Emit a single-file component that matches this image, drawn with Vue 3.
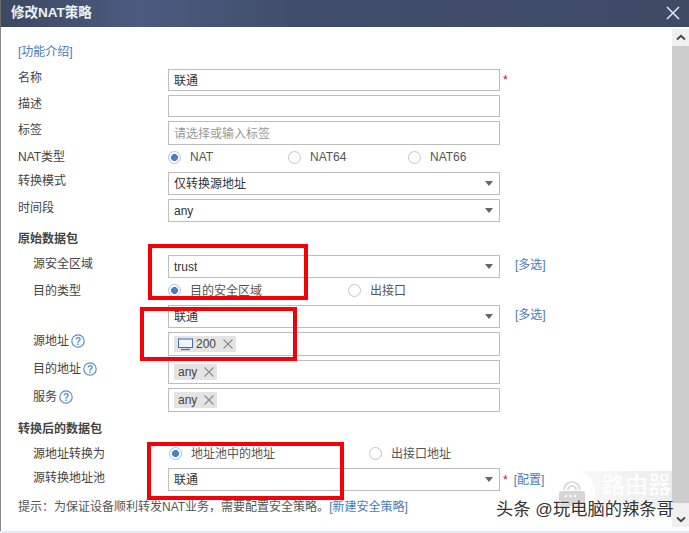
<script setup>
const tagSources = [
  { label: '源地址', chip: '200', icon: true, h: 'r332' },
  { label: '目的地址', chip: 'any', icon: false, h: 'r360' },
  { label: '服务', chip: 'any', icon: false, h: 'r388' },
]
</script>

<template>
  <div class="page">
    <header class="titlebar">
      <span class="title">修改NAT策略</span>
      <svg class="close" width="14" height="14" viewBox="0 0 14 14"><path d="M1 1 13 13M13 1 1 13" stroke="#e4e8ee" stroke-width="1.500" fill="none" /></svg>
    </header>

    <div class="body">
      <main class="form">
        <div class="intro"><a class="link">[功能介绍]</a></div>

        <div class="row h22">
          <label class="lab up4">名称</label>
          <div class="box input"><span>联通</span></div>
          <span class="star">*</span>
        </div>
        <div class="row h22 mt4">
          <label class="lab up4">描述</label>
          <div class="box input"></div>
        </div>
        <div class="row h24 mt4">
          <label class="lab up">标签</label>
          <div class="box input"><span class="ph">请选择或输入标签</span></div>
        </div>
        <div class="row h24">
          <label class="lab">NAT类型</label>
          <div class="radios">
            <span class="radio on w120"><i></i>NAT</span>
            <span class="radio w120"><i></i>NAT64</span>
            <span class="radio"><i></i>NAT66</span>
          </div>
        </div>
        <div class="row h23 mt3">
          <label class="lab up">转换模式</label>
          <div class="box select"><span>仅转换源地址</span><b class="caret"></b></div>
        </div>
        <div class="row h23 mt4">
          <label class="lab up">时间段</label>
          <div class="box select"><span>any</span><b class="caret"></b></div>
        </div>

        <div class="section s1">原始数据包</div>

        <div class="row h23 mt6">
          <label class="lab sub up">源安全区域</label>
          <div class="box select"><span>trust</span><b class="caret"></b></div>
          <a class="link more">[多选]</a>
        </div>
        <div class="row h24 low">
          <label class="lab sub">目的类型</label>
          <div class="radios">
            <span class="radio on w180"><i></i>目的安全区域</span>
            <span class="radio"><i></i>出接口</span>
          </div>
        </div>
        <div class="row h23 mt3">
          <label class="lab sub"></label>
          <div class="box select"><span>联通</span><b class="caret"></b></div>
          <a class="link more">[多选]</a>
        </div>

        <div v-for="t in tagSources" :key="t.h" class="row h24 mt4">
          <label class="lab sub up">
            {{ t.label }}
            <svg class="help" width="14" height="14" viewBox="0 0 14 14">
              <circle cx="7" cy="7" r="6.200" fill="#fff" stroke="#5b8fcb" stroke-width="1.200" />
              <text x="7" y="10.800" text-anchor="middle" class="helptext">?</text>
            </svg>
          </label>
          <div class="box tags">
            <span class="chip">
              <svg v-if="t.icon" width="15" height="13" viewBox="0 0 15 13" class="mon">
                <rect x="0.500" y="1" width="14" height="8.500" fill="#eef4fb" stroke="#3f6fb0" />
                <path d="M3 11.500h9" stroke="#3f6fb0" stroke-width="1.200" />
              </svg>
              {{ t.chip }}
              <svg width="10" height="10" viewBox="0 0 10 10" class="x"><path d="M.5.5l9 9M9.500.5l-9 9" stroke="#8a8a8a" stroke-width="1.100" /></svg>
            </span>
          </div>
        </div>

        <div class="section s2">转换后的数据包</div>

        <div class="row h24 mt2 low">
          <label class="lab sub">源地址转换为</label>
          <div class="radios nudge">
            <span class="radio on w200"><i></i>地址池中的地址</span>
            <span class="radio"><i></i>出接口地址</span>
          </div>
        </div>
        <div class="row h23 mt3">
          <label class="lab sub up2">源转换地址池</label>
          <div class="box select"><span>联通</span><b class="caret"></b></div>
          <span class="star">*</span>
          <a class="link conf">[配置]</a>
        </div>

        <p class="hint">提示：为保证设备顺利转发NAT业务，需要配置安全策略。<a class="link">[新建安全策略]</a></p>
      </main>

      <aside class="scrollbar">
        <div class="sbtn">
          <svg width="10" height="7" viewBox="0 0 10 7"><path d="M1 5.500 5 1.800l4 3.700" stroke="#444" stroke-width="1.800" fill="none" /></svg>
        </div>
        <div class="track"></div>
        <div class="sbtn bottom">
          <svg width="10" height="7" viewBox="0 0 10 7"><path d="M1 1.500 5 5.200l4-3.700" stroke="#444" stroke-width="1.800" fill="none" /></svg>
        </div>
      </aside>
    </div>
    <div class="footer"></div>

    <div class="mark m1"></div>
    <div class="mark m2"></div>
    <div class="mark m3"></div>

    <div class="wm-band"></div>
    <div class="wm-circle">
      <svg width="28" height="32" viewBox="0 0 28 32">
        <path d="M6 13a8 8 0 0 1 16 0M10 13a4 4 0 0 1 8 0" stroke="#dcdcdc" stroke-width="2.200" fill="none" />
        <rect x="1" y="14" width="26" height="15" rx="2" fill="#d6d6d6" />
        <circle cx="8" cy="19" r="1.200" fill="#fff" /><circle cx="12.500" cy="19" r="1.200" fill="#fff" /><circle cx="17" cy="19" r="1.200" fill="#fff" />
      </svg>
    </div>
    <span class="wm-text">路由器</span>
    <span class="wm-author">头条 @玩电脑的辣条哥</span>
  </div>
</template>

<style scoped>
.page {
  position: relative;
  width: 689px;
  height: 533px;
  overflow: hidden;
  background: #fff;
  font-family: "Liberation Sans", "Noto Sans CJK SC", sans-serif;
  font-size: 12px;
  line-height: 16px;
  color: #444;
}
.titlebar {
  height: 27px;
  display: flex;
  align-items: center;
  justify-content: space-between;
  padding: 0 11px;
  background: linear-gradient(90deg, #3c4861 0, #4b5b80 20%, #414e6b 42%, #3f4b65 100%);
  border-left: 1px solid #6b6b6b;
  box-sizing: border-box;
}
.title { color: #eef1f6; font-size: 13.500px; font-weight: 700; line-height: 27px; margin-bottom: 2px; margin-left: -1px; }
.close { margin-bottom: 2px; margin-right: -2px; }
.body {
  display: flex;
  height: 504px;
  border-left: 1px solid #8a8a8a;
  box-sizing: border-box;
}
.form { flex: 1; padding: 15px 0 0 17px; min-width: 0; }
.intro { height: 27px; line-height: 18px; padding-top: 1px; box-sizing: border-box; }
.link { color: #4a7ab8; }
.row { display: flex; align-items: center; }
.low { padding-top: 1px; box-sizing: border-box; }
.h22 { height: 22px; }
.h23 { height: 23px; }
.h24 { height: 24px; }
.mt2 { margin-top: 2px; }
.mt3 { margin-top: 3px; }
.mt4 { margin-top: 4px; }
.mt6 { margin-top: 6px; }
.lab { width: 150px; flex: none; display: flex; align-items: center; gap: 2px; white-space: nowrap; }
.lab.sub { padding-left: 15px; box-sizing: border-box; }
.up { padding-bottom: 6px; }
.up4 { padding-bottom: 4px; }
.up2 { padding-bottom: 4px; }
.box {
  width: 332px;
  height: 100%;
  flex: none;
  box-sizing: border-box;
  border: 1px solid #bdbdbd;
  background: #fff;
  display: flex;
  align-items: center;
  padding-left: 5px;
  color: #333;
}
.input { padding-top: 1px; }
.select { justify-content: space-between; padding-right: 5px; }
.caret {
  width: 0;
  height: 0;
  border-left: 4.500px solid transparent;
  border-right: 4.500px solid transparent;
  border-top: 5px solid #666;
  margin-right: 1px;
}
.ph { color: #999; }
.star { color: #c8143c; margin-left: 3px; font-size: 12px; line-height: 12px; }
.more { margin-left: 15px; padding-bottom: 4px; }
.conf { margin-left: 6px; }
.radios { display: flex; align-items: center; }
.nudge { margin-left: 1px; }
.radio { display: inline-flex; align-items: center; gap: 9px; color: #555; }
.radio i {
  width: 13px;
  height: 13px;
  box-sizing: border-box;
  border: 1px solid #c4c4c4;
  border-radius: 50%;
  background: #fff;
}
.radio.on i {
  border-color: #a9c2e4;
  background: radial-gradient(circle, #4a7fd0 0, #4a7fd0 3.200px, #fff 3.800px);
}
.w120 { width: 120px; }
.w180 { width: 180px; }
.w200 { width: 200px; }
.section { font-weight: 700; color: #444; }
.s1 { height: 20px; line-height: 20px; margin-top: 7px; }
.s2 { height: 20px; line-height: 20px; margin-top: 7px; }
.help { flex: none; }
.helptext { font-size: 10px; fill: #5b8fcb; font-family: "Liberation Sans", sans-serif; font-weight: 700; }
.chip {
  display: inline-flex;
  align-items: center;
  gap: 3px;
  height: 16px;
  background: #e4e4e4;
  padding: 0 3px 0 4px;
  color: #444;
}
.x { margin-left: 4px; }
.hint { margin: 6px 0 0; height: 20px; line-height: 20px; white-space: nowrap; color: #555; }
.scrollbar {
  width: 17px;
  flex: none;
  margin-top: 2px;
  margin-bottom: 4px;
  background: #cdcdcd;
  display: flex;
  flex-direction: column;
}
.sbtn {
  height: 17px;
  flex: none;
  background: #f0f0f0;
  display: flex;
  align-items: center;
  justify-content: center;
}
.sbtn.bottom { height: 24px; align-items: flex-end; padding-bottom: 4px; box-sizing: border-box; }
.track { flex: 1; }
.footer { height: 2px; background: #e8eaec; }

.mark { position: absolute; border: 4px solid #f40006; box-sizing: border-box; }
.m1 { left: 148px; top: 244px; width: 160px; height: 56px; }
.m2 { left: 140px; top: 307px; width: 157px; height: 54px; }
.m3 { left: 147px; top: 442px; width: 197px; height: 58px; }

.wm-band {
  position: absolute;
  left: 575px;
  top: 471px;
  width: 97px;
  height: 36px;
  background: linear-gradient(90deg, #fafafa, #ececec);
}
.wm-circle {
  position: absolute;
  left: 549px;
  top: 470px;
  width: 46px;
  height: 46px;
  border-radius: 50%;
  background: #fff;
  display: flex;
  align-items: center;
  justify-content: center;
}
.wm-text {
  position: absolute;
  left: 602px;
  top: 471px;
  font-size: 23px;
  line-height: 28px;
  color: #fff;
}
.wm-author {
  position: absolute;
  left: 496px;
  top: 498px;
  font-size: 17.300px;
  line-height: 22px;
  color: #333;
  white-space: nowrap;
  text-shadow: 0 0 2px #fff, 0 0 2px #fff;
}
</style>

<style>
body { margin: 0; }
</style>
